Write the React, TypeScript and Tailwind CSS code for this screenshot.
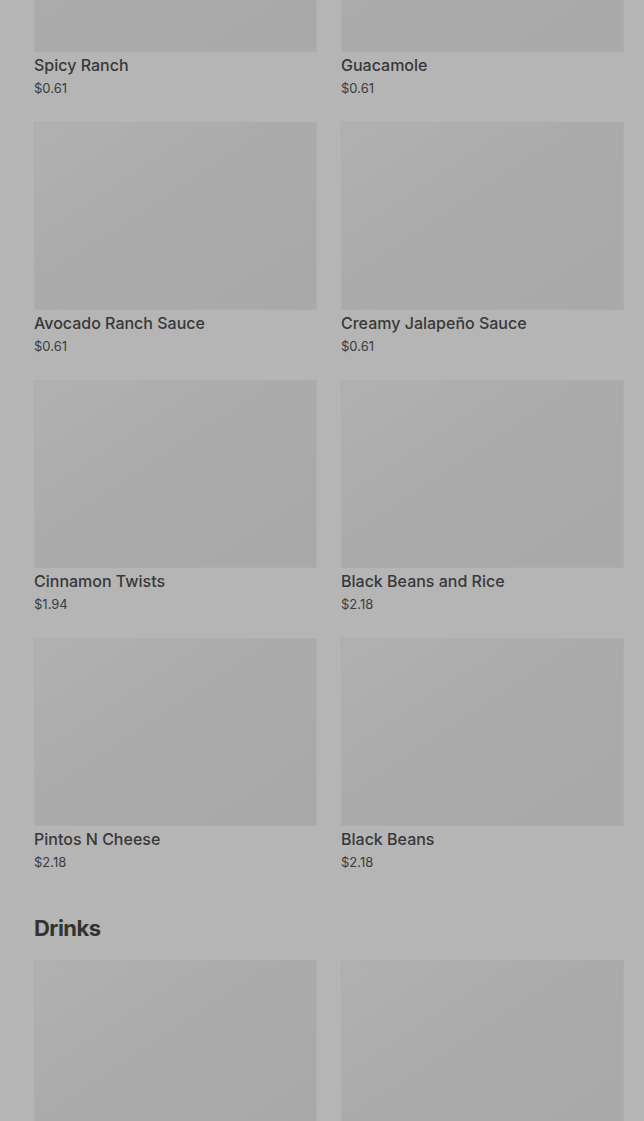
const sides = [
  { name: "Spicy Ranch", price: "$0.61" },
  { name: "Guacamole", price: "$0.61" },
  { name: "Avocado Ranch Sauce", price: "$0.61" },
  { name: "Creamy Jalapeño Sauce", price: "$0.61" },
  { name: "Cinnamon Twists", price: "$1.94" },
  { name: "Black Beans and Rice", price: "$2.18" },
  { name: "Pintos N Cheese", price: "$2.18" },
  { name: "Black Beans", price: "$2.18" },
]

type Item = { name: string; price: string }

const Thumb = () => (
  <div className="h-[188px] w-full bg-gradient-to-br from-[#b1b1b1] via-[#aaaaaa] to-[#a9a9a9] border border-[#adadad]" />
)

const Card = ({ item }: { item: Item }) => {
  return (
    <div className="flex flex-col">
      <Thumb />
      <p className="mt-[1px] text-[16px] leading-6 font-medium text-[#383838]">{item.name}</p>
      <p className="mt-[1px] text-[13px] leading-5 text-[#3c3c3c]">{item.price}</p>
    </div>
  )
}

const App = () => {
  return (
    <div className="h-[1121px] w-full overflow-hidden bg-[#b5b5b5]" style={{ fontFamily: "Inter, 'Noto Sans', sans-serif" }}>
      {/* page is scrolled part way down the menu */}
      <div className="-mt-[136px] pl-[34px] pr-[20px]">
        <div className="grid grid-cols-2 gap-x-6 gap-y-6">
          {sides.map((s) => (
            <Card key={s.name} item={s} />
          ))}
        </div>

        <h2 className="mt-10 mb-4 text-[22px] leading-8 font-bold tracking-tight text-[#333333]">Drinks</h2>
        {/* only the tops of the drink pictures are in view */}
        <div className="grid grid-cols-2 gap-x-6">
          <Thumb />
          <Thumb />
        </div>
      </div>
    </div>
  )
}

export default App
